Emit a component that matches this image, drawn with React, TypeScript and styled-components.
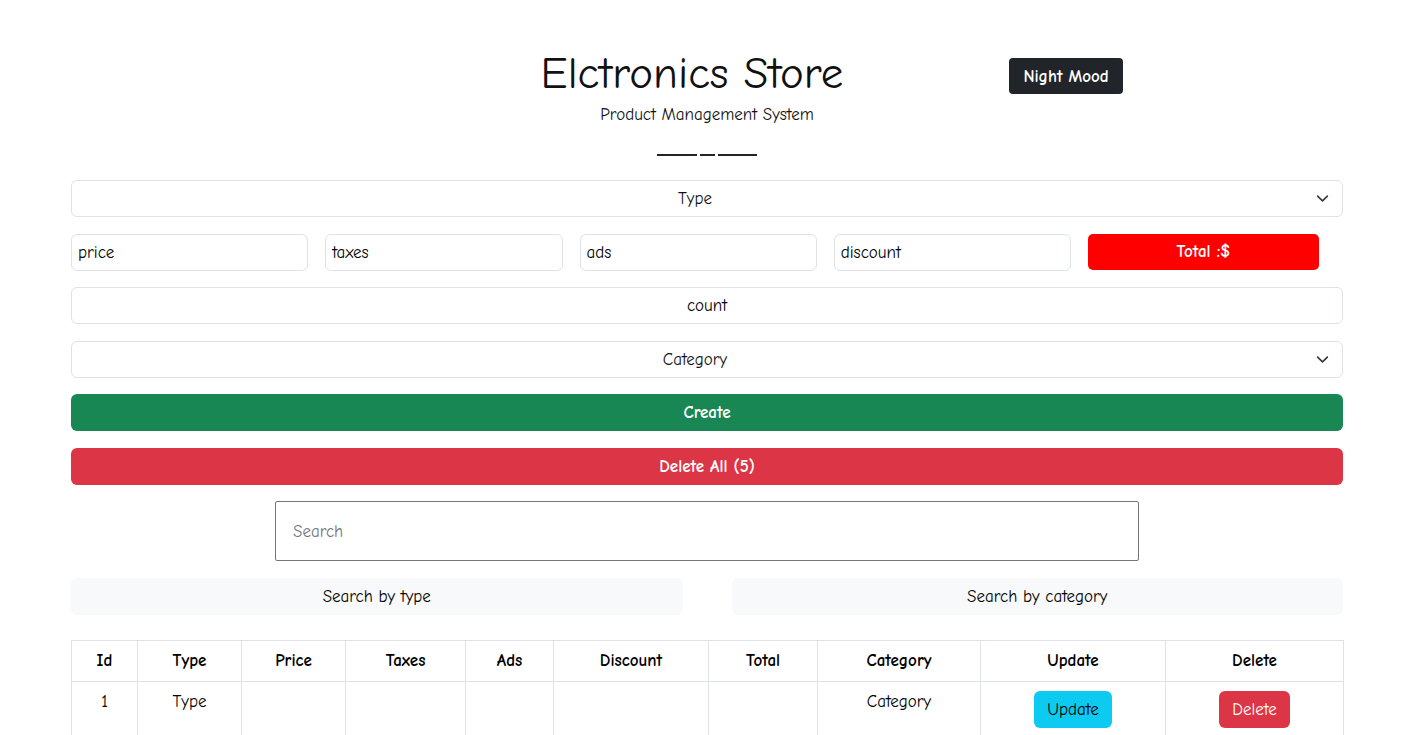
import styled, { createGlobalStyle } from "styled-components";

const GlobalStyle = createGlobalStyle`
	* {
		box-sizing: border-box;
	}
	body {
		margin: 0;
		background: #fff;
		color: #111;
		font-family: "Comic Sans MS", "Comic Neue", "Open Sans", sans-serif;
		font-size: 17px;
		line-height: 1.5;
	}
`;

const Container = styled.div`
	width: 1272px;
	margin: 0 75px 0 71px;
	padding: 49px 0 0;
`;

const Header = styled.header`
	display: grid;
	grid-template-columns: 1fr auto 1fr;
	align-items: start;
`;

const Title = styled.h1`
	grid-column: 2;
	margin: 0 30px 0 0;
	font-size: 45px;
	font-weight: 400;
	line-height: 48px;
	color: #111;
	text-align: center;
`;

const NightButton = styled.button`
	grid-column: 3;
	justify-self: start;
	margin: 9px 0 0 136px;
	height: 36px;
	padding: 0 14px;
	border: none;
	border-radius: 4px;
	background: #212529;
	color: #fff;
	font-family: inherit;
	font-size: 17px;
	font-weight: 700;
`;

const Subtitle = styled.p`
	margin: 6px 0 0;
	text-align: center;
	font-size: 17px;
	line-height: 24px;
	color: #111;
`;

const Dashes = styled.div`
	display: flex;
	justify-content: center;
	gap: 3px;
	height: 9px;
	margin: 20px 0 24px;
`;

const Dash = styled.span<{ $w: number }>`
	width: ${(p) => p.$w}px;
	height: 9px;
	border-bottom: 2px solid #212529;
`;

const Form = styled.div`
	display: flex;
	flex-direction: column;
	gap: 16.5px;
`;

const SelectWrap = styled.div`
	position: relative;
	height: 37px;
`;

const Select = styled.select`
	width: 100%;
	height: 37px;
	padding: 0 36px 0 12px;
	appearance: none;
	border: 1px solid #dee2e6;
	border-radius: 6px;
	background: #fff;
	color: #111;
	font-family: inherit;
	font-size: 17px;
	text-align: center;
	text-align-last: center;
`;

const Chevron = styled.svg`
	position: absolute;
	right: 14px;
	top: 12px;
	width: 13px;
	height: 13px;
	pointer-events: none;
`;

const PriceRow = styled.div`
	display: flex;
	gap: 17px;
	height: 37px;
`;

const Field = styled.input`
	flex: 1;
	min-width: 0;
	height: 37px;
	padding: 0 6px;
	border: 1px solid #dee2e6;
	border-radius: 6px;
	color: #000;
	font-family: inherit;
	font-size: 17px;
	&::placeholder {
		color: #000;
		opacity: 1;
	}
`;

const CountField = styled(Field)`
	flex: none;
	width: 100%;
	text-align: center;
`;

const TotalBadge = styled.div`
	width: 231px;
	height: 36px;
	margin-right: 24px;
	display: flex;
	align-items: center;
	justify-content: center;
	border-radius: 5px;
	background: #ff0000;
	color: #fff;
	font-size: 17px;
	font-weight: 700;
`;

const WideButton = styled.button<{ $bg: string }>`
	width: 100%;
	height: 37px;
	flex: none;
	border: none;
	border-radius: 6px;
	background: ${(p) => p.$bg};
	color: #fff;
	font-family: inherit;
	font-size: 17px;
	font-weight: 700;
`;

const SearchInput = styled.input`
	display: block;
	flex: none;
	width: 864px;
	height: 60px;
	margin: 0 auto 0 204px;
	padding: 0 17px;
	border: 1px solid #767676;
	border-radius: 2px;
	font-family: inherit;
	font-size: 17px;
	&::placeholder {
		color: #757575;
	}
`;

const SearchBy = styled.div`
	display: flex;
	gap: 49px;
	height: 37px;
`;

const LightButton = styled.button`
	flex: 1;
	height: 37px;
	border: 1px solid #f8f9fa;
	border-radius: 6px;
	background: #f8f9fa;
	color: #000;
	font-family: inherit;
	font-size: 17px;
`;

const Table = styled.table`
	width: 1272px;
	margin-top: 25px;
	border-collapse: collapse;
	table-layout: fixed;
	th,
	td {
		border: 1px solid #dee2e6;
		padding: 8px;
		text-align: center;
		vertical-align: top;
		color: #000;
		font-size: 17px;
		line-height: 24px;
	}
	th {
		font-weight: 700;
	}
	td {
		height: 70px;
	}
`;

const CellButton = styled.button<{ $bg: string; $fg: string }>`
	margin-top: 1px;
	height: 37px;
	padding: 0 13px;
	border: none;
	border-radius: 6px;
	background: ${(p) => p.$bg};
	color: ${(p) => p.$fg};
	font-family: inherit;
	font-size: 17px;
`;

const columns = [
	{ name: "Id", w: 66 },
	{ name: "Type", w: 104 },
	{ name: "Price", w: 104 },
	{ name: "Taxes", w: 120 },
	{ name: "Ads", w: 88 },
	{ name: "Discount", w: 155 },
	{ name: "Total", w: 109 },
	{ name: "Category", w: 163 },
	{ name: "Update", w: 185 },
	{ name: "Delete", w: 178 },
];

const ChevronIcon = () => (
	<Chevron viewBox="0 0 16 16" fill="none" stroke="#343a40" strokeWidth="2" strokeLinecap="round" strokeLinejoin="round">
		<path d="m2 5 6 6 6-6" />
	</Chevron>
);

export default function App() {
	return (
		<>
			<GlobalStyle />
			<Container>
				<Header>
					<Title>Elctronics Store</Title>
					<NightButton>Night Mood</NightButton>
				</Header>
				<Subtitle>Product Management System</Subtitle>
				<Dashes>
					<Dash $w={40} />
					<Dash $w={15} />
					<Dash $w={39} />
				</Dashes>

				<Form>
					<SelectWrap>
						<Select defaultValue="Type">
							<option>Type</option>
						</Select>
						<ChevronIcon />
					</SelectWrap>

					<PriceRow>
						<Field placeholder="price" />
						<Field placeholder="taxes" />
						<Field placeholder="ads" />
						<Field placeholder="discount" />
						<TotalBadge>Total :$</TotalBadge>
					</PriceRow>

					<CountField placeholder="count" />

					<SelectWrap>
						<Select defaultValue="Category">
							<option>Category</option>
						</Select>
						<ChevronIcon />
					</SelectWrap>

					<WideButton $bg="#198754">Create</WideButton>
					<WideButton $bg="#dc3545">Delete All (5)</WideButton>

					<SearchInput placeholder="Search" />

					<SearchBy>
						<LightButton>Search by type</LightButton>
						<LightButton>Search by category</LightButton>
					</SearchBy>
				</Form>

				<Table>
					<colgroup>
						{columns.map((c) => (
							<col key={c.name} style={{ width: c.w }} />
						))}
					</colgroup>
					<thead>
						<tr>
							{columns.map((c) => (
								<th key={c.name}>{c.name}</th>
							))}
						</tr>
					</thead>
					<tbody>
						<tr>
							<td>1</td>
							<td>Type</td>
							<td></td>
							<td></td>
							<td></td>
							<td></td>
							<td></td>
							<td>Category</td>
							<td>
								<CellButton $bg="#0dcaf0" $fg="#000">Update</CellButton>
							</td>
							<td>
								<CellButton $bg="#dc3545" $fg="#fff">Delete</CellButton>
							</td>
						</tr>
					</tbody>
				</Table>
			</Container>
		</>
	);
}
